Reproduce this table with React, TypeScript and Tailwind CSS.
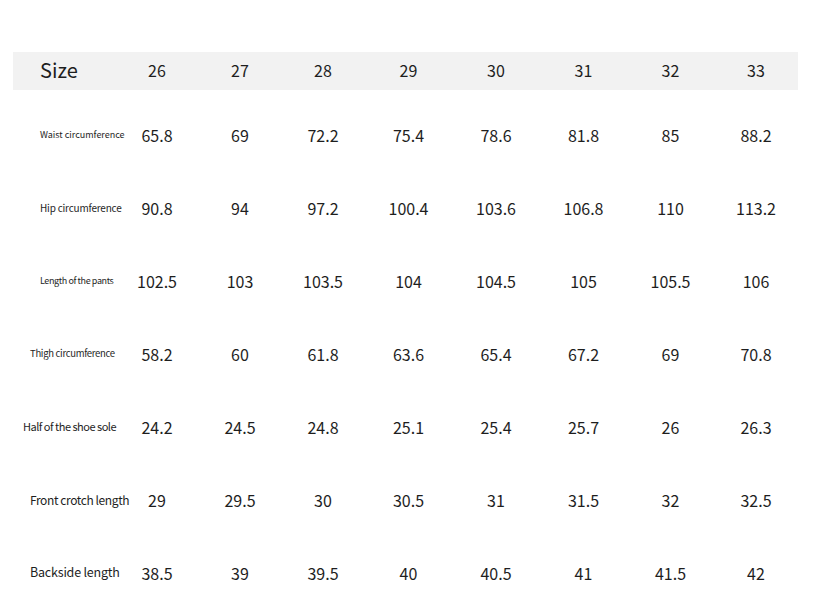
const sizes = ["26", "27", "28", "29", "30", "31", "32", "33"];

const rows = [
  { label: "Waist circumference", cls: "pl-[27px] text-[9px] tracking-[0px]", values: ["65.8", "69", "72.2", "75.4", "78.6", "81.8", "85", "88.2"] },
  { label: "Hip circumference", cls: "pl-[27px] text-[10px] tracking-[-0.2px]", values: ["90.8", "94", "97.2", "100.4", "103.6", "106.8", "110", "113.2"] },
  { label: "Length of the pants", cls: "pl-[27px] text-[9px] tracking-[-0.4px]", values: ["102.5", "103", "103.5", "104", "104.5", "105", "105.5", "106"] },
  { label: "Thigh circumference", cls: "pl-[17px] text-[9.5px] tracking-[-0.3px]", values: ["58.2", "60", "61.8", "63.6", "65.4", "67.2", "69", "70.8"] },
  { label: "Half of the shoe sole", cls: "pl-[10px] text-[11px] tracking-[-0.5px]", values: ["24.2", "24.5", "24.8", "25.1", "25.4", "25.7", "26", "26.3"] },
  { label: "Front crotch length", cls: "pl-[17px] text-[12px] tracking-[-0.4px]", values: ["29", "29.5", "30", "30.5", "31", "31.5", "32", "32.5"] },
  { label: "Backside length", cls: "pl-[17px] text-[12.5px] tracking-[-0.2px]", values: ["38.5", "39", "39.5", "40", "40.5", "41", "41.5", "42"] },
];

const grid = "grid grid-cols-[102px_84px_82px_84px_87px_88px_87px_87px_84px]";

export default function App() {
  return (
    <div
      className="w-[813px] h-[614px] bg-white text-[#1e1e1e] overflow-hidden"
      style={{ fontFamily: '"Noto Sans CJK SC", "Noto Sans", sans-serif' }}
    >
      <div className="pt-[52px] pl-[13px]">
        {/* header */}
        <div className={`${grid} h-[38px] w-[785px] items-center bg-[#f2f2f2] pb-[3px]`}>
          <div className="pl-[27px] text-[20px]">Size</div>
          {sizes.map((s) => (
            <div key={s} className="text-center text-[16px]">
              {s}
            </div>
          ))}
        </div>

        <div className="pt-[8px]">
          {rows.map((row) => (
            <div key={row.label} className={`${grid} h-[73px] items-center`}>
              <div className={`whitespace-nowrap ${row.cls}`}>{row.label}</div>
              {row.values.map((v, i) => (
                <div key={i} className="text-center text-[16px]">
                  {v}
                </div>
              ))}
            </div>
          ))}
        </div>
      </div>
    </div>
  );
}
